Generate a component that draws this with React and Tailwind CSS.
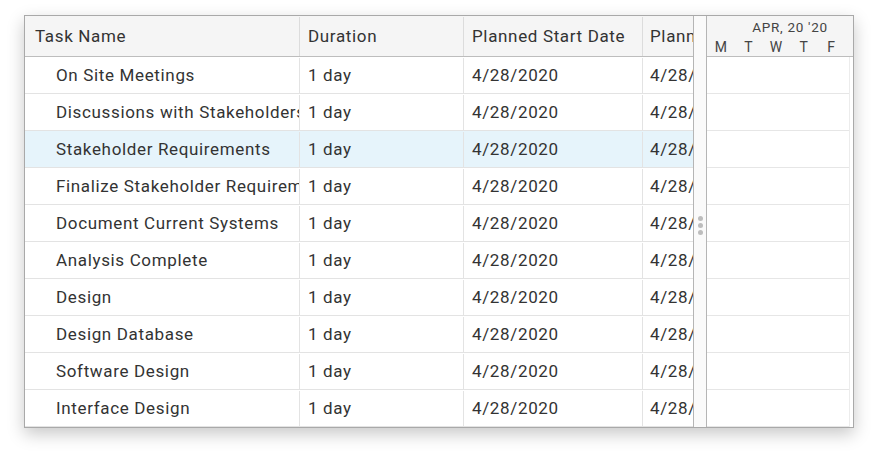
const tasks = [
  'On Site Meetings',
  'Discussions with Stakeholders',
  'Stakeholder Requirements',
  'Finalize Stakeholder Requirements',
  'Document Current Systems',
  'Analysis Complete',
  'Design',
  'Design Database',
  'Software Design',
  'Interface Design',
];

const days = ['M', 'T', 'W', 'T', 'F'];

export default function App() {
  return (
    <div className="w-[878px] h-[462px] bg-white pl-[24px] pt-[15px] font-['Roboto',sans-serif] text-[#333]">
      <div className="w-[830px] h-[413px] flex border border-[#a9a9a9] bg-white shadow-[0_6px_16px_rgba(0,0,0,0.22)] overflow-hidden">
        {/* grid */}
        <div className="w-[668px] shrink-0 overflow-hidden flex flex-col text-[17px] tracking-[0.65px]">
          <div className="flex h-[41px] shrink-0 bg-[#f5f5f5] border-b border-[#bdbdbd] pt-[1px]">
            <div className="w-[275px] shrink-0 border-r border-[#dcdcdc] pl-[10px] flex items-center">Task Name</div>
            <div className="w-[164px] shrink-0 border-r border-[#dcdcdc] pl-[8px] flex items-center">Duration</div>
            <div className="w-[179px] shrink-0 border-r border-[#dcdcdc] pl-[8px] flex items-center whitespace-nowrap">Planned Start Date</div>
            <div className="w-[50px] shrink-0 pl-[7px] flex items-center whitespace-nowrap overflow-hidden">Planned Finish</div>
          </div>
          {tasks.map((t, i) => (
            <div
              key={i}
              className={`flex h-[37px] shrink-0 border-b border-[#e3e3e3] pt-[1px] ${i === 2 ? 'bg-[#e6f4fb]' : 'bg-white'}`}
            >
              <div className="w-[275px] shrink-0 border-r border-[#e3e3e3] pl-[31px] flex items-center whitespace-nowrap overflow-hidden">{t}</div>
              <div className="w-[164px] shrink-0 border-r border-[#e3e3e3] pl-[8px] flex items-center">1 day</div>
              <div className="w-[179px] shrink-0 border-r border-[#e3e3e3] pl-[8px] flex items-center">4/28/2020</div>
              <div className="w-[50px] shrink-0 pl-[7px] flex items-center whitespace-nowrap overflow-hidden">4/28/2020</div>
            </div>
          ))}
        </div>
        {/* splitter */}
        <div className="w-[14px] shrink-0 border-l border-r border-[#b5b5b5] bg-[#fafafa] flex flex-col items-center justify-center gap-[2px] pt-[8px]">
          <span className="w-[5px] h-[5px] rounded-full bg-[#bdbdbd]" />
          <span className="w-[5px] h-[5px] rounded-full bg-[#bdbdbd]" />
          <span className="w-[5px] h-[5px] rounded-full bg-[#bdbdbd]" />
        </div>
        {/* gantt */}
        <div className="flex-1 flex flex-col">
          <div className="h-[41px] shrink-0 bg-[#f5f5f5] border-b border-[#bdbdbd] flex flex-col pr-[4px] text-[#444]">
            <div className="text-[13.5px] leading-[14px] tracking-[0.7px] text-center pt-[4px] pl-[24px]">APR, 20 '20</div>
            <div className="flex text-[14px] leading-[14px] mt-[6px]">
              {days.map((d, i) => (
                <div key={i} className="w-[27.6px] text-center">{d}</div>
              ))}
            </div>
          </div>
          {tasks.map((t, i) => (
            <div key={i} className="h-[37px] shrink-0 flex">
              <div className="flex-1 border-b border-[#e6e6e6]" />
              <div className="w-[4px] border-l border-[#ececec]" />
            </div>
          ))}
        </div>
      </div>
    </div>
  );
}
